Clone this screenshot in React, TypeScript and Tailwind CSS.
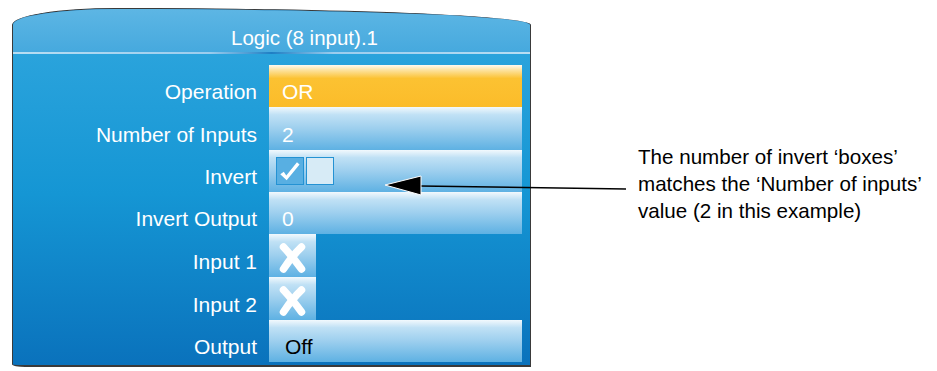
import React from "react";

const font = { fontFamily: '"Liberation Sans", Arial, sans-serif' };

const fieldBg =
  "bg-[linear-gradient(to_bottom,#f2f9fd_0%,#c0e1f5_18%,#9dcfee_50%,#5eb1e3_100%)]";

const CheckMark = () => (
  <svg width="28" height="28" viewBox="0 0 28 28" className="block">
    <polygon points="3.5,17.5 7.3,14.8 10,18.8 21.5,4.5 24.3,7 10.4,24" fill="#ffffff" />
  </svg>
);

const Cross = () => (
  <svg width="47" height="43" viewBox="0 0 47 43" className="block">
    <g stroke="#ffffff" strokeWidth="7.5" strokeLinecap="round">
      <path d="M14.5 13 Q23 22 32.5 35" fill="none" />
      <path d="M32.5 13 Q23 22 14.5 35" fill="none" />
    </g>
  </svg>
);

type Row = {
  label: string;
  h: string;
  kind: "text" | "orange" | "invert" | "input";
  value?: string;
  dark?: boolean;
};

const rows: Row[] = [
  { label: "Operation", h: "h-[42px]", kind: "orange", value: "OR" },
  { label: "Number of Inputs", h: "h-[43px]", kind: "text", value: "2" },
  { label: "Invert", h: "h-[42px]", kind: "invert" },
  { label: "Invert Output", h: "h-[42px]", kind: "text", value: "0" },
  { label: "Input 1", h: "h-[43px]", kind: "input" },
  { label: "Input 2", h: "h-[43px]", kind: "input" },
  { label: "Output", h: "h-[42px]", kind: "text", value: "Off", dark: true },
];

const Field = ({ row }: { row: Row }) => {
  if (row.kind === "input") {
    return (
      <div className={`w-[47px] h-full ${fieldBg}`}>
        <Cross />
      </div>
    );
  }
  if (row.kind === "invert") {
    return (
      <div className={`w-[253px] h-full ${fieldBg} flex items-center pl-[7px] gap-[2px]`}>
        <div className="w-[28px] h-[28px] border-[1.5px] border-[#2492d3] bg-[#58afe2] flex items-center justify-center">
          <CheckMark />
        </div>
        <div className="w-[28px] h-[28px] border-[1.5px] border-[#2492d3] bg-[#d7ebf6]" />
      </div>
    );
  }
  const bg =
    row.kind === "orange"
      ? "bg-[linear-gradient(to_bottom,#fffaf0_0%,#fde3a0_12%,#fcc232_32%,#fbbc2a_100%)]"
      : fieldBg;
  return (
    <div
      className={`w-[253px] h-full ${bg} flex items-end pb-[5px] leading-none text-[21px] ${
        row.dark ? "text-black pl-[16px]" : "text-white pl-[13px]"
      }`}
    >
      {row.value}
    </div>
  );
};

export default function App() {
  return (
    <div className="relative w-[937px] h-[371px] bg-white flex overflow-hidden" style={font}>
      {/* panel */}
      <div className="ml-[12px] mt-[8px] w-[519px] h-[359px] flex flex-col border-x border-t border-b-2 border-[#3a3a3a] rounded-tl-[110px_18px] rounded-tr-[440px_18px] rounded-bl-[14px_3px] overflow-hidden bg-[#0a72bc]">
        <div className="h-[43px] shrink-0 bg-[linear-gradient(to_bottom,#5db6e4,#46a9de)] flex items-end justify-center pl-[66px] pb-[4px] text-white text-[20.5px] leading-none">
          Logic (8 input).1
        </div>
        <div className="h-[2px] shrink-0 bg-[linear-gradient(to_right,#b8def3,#9ccdee_38%,#1e7fc4_50%,#9ccdee_62%,#b8def3)]" />
        <div className="flex-1 flex flex-col pt-[11px] bg-[linear-gradient(to_bottom,#2aa3dc,#1596d4_45%,#0a72bc)]">
          {rows.map((row) => (
            <div key={row.label} className={`flex ${row.h}`}>
              <div className="w-[244px] shrink-0 flex items-end justify-end pb-[5px] text-white text-[21px] leading-none">
                {row.label}
              </div>
              <div className="ml-[12px] h-full">
                <Field row={row} />
              </div>
            </div>
          ))}
        </div>
      </div>

      {/* annotation */}
      <div className="ml-[107px] mt-[143px] text-black text-[20.6px] leading-[27px] whitespace-nowrap">
        <div>The number of invert ‘boxes’</div>
        <div>matches the ‘Number of inputs’</div>
        <div>value (2 in this example)</div>
      </div>

      {/* arrow */}
      <svg className="absolute inset-0 pointer-events-none" width="937" height="371">
        <line x1="420" y1="186" x2="626" y2="189" stroke="#000" strokeWidth="1.5" />
        <polygon points="385,185 421,176 421,195" fill="#000" stroke="#fff" strokeWidth="1" />
      </svg>
    </div>
  );
}
